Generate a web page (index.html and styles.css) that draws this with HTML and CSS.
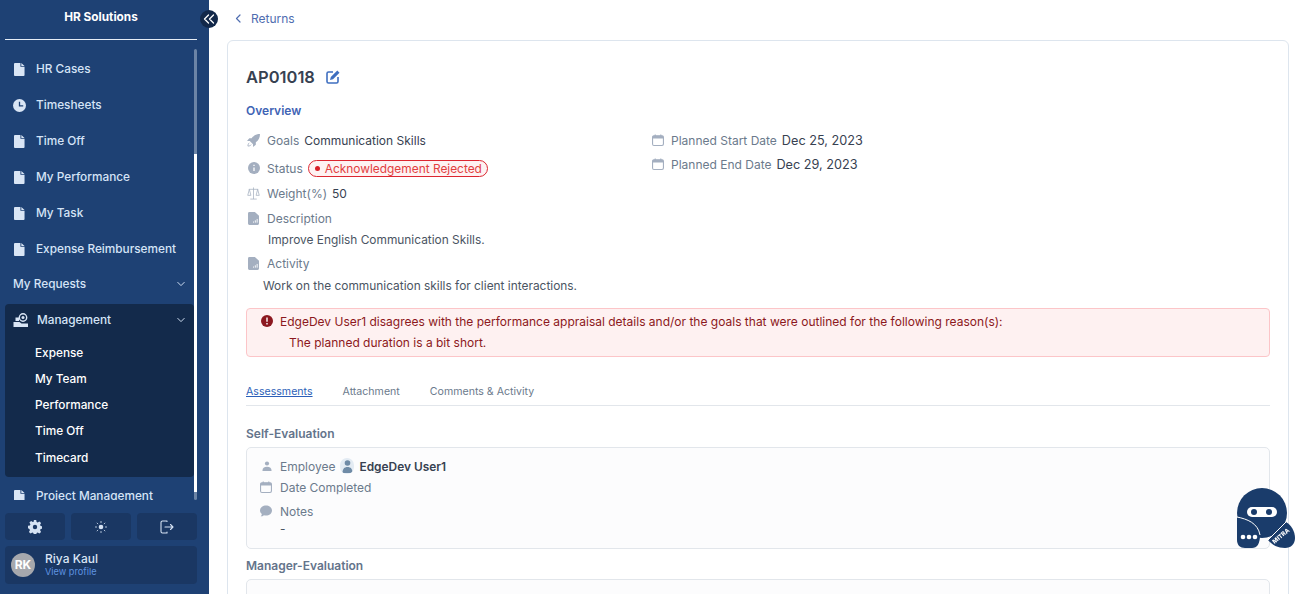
FILE: index.html
```html
<!DOCTYPE html>
<html lang="en">
  <head>
    <meta charset="UTF-8" />
    <meta name="viewport" content="width=device-width, initial-scale=1.0" />
    <title>HR Solutions</title>
    <link rel="stylesheet" href="styles.css">
  </head>

  <body>
    <svg class="sprite" width="0" height="0">
      <symbol id="i-file" viewBox="0 0 12 14"><path d="M1 0h6v4h4.500v9a1 1 0 0 1-1 1H1a1 1 0 0 1-1-1V1a1 1 0 0 1 1-1zM8 0l3.500 3.200H8z" fill="currentColor"/></symbol>
      <symbol id="i-doc" viewBox="0 0 12 14"><path d="M1.500 0H7.500l4.500 4v8.500A1.500 1.500 0 0 1 10.500 14h-9A1.500 1.500 0 0 1 0 12.500v-11A1.500 1.500 0 0 1 1.500 0z" fill="currentColor"/><path d="M6 11.500v-1.200M8 11.500V9M10 11.500V7.500" stroke="#fff" stroke-width="1"/></symbol>
      <symbol id="i-cal" viewBox="0 0 13 13"><rect x="0.600" y="2" width="11.800" height="10.400" rx="1.500" fill="none" stroke="currentColor" stroke-width="1.200"/><path d="M0.600 3.500a1.500 1.500 0 0 1 1.500-1.500h8.800a1.500 1.500 0 0 1 1.500 1.500V5H0.600z" fill="currentColor"/><path d="M3.500 0.500v2M9.500 0.500v2" stroke="currentColor" stroke-width="1.200"/></symbol>
      <symbol id="i-chev" viewBox="0 0 10 6"><path d="M1 1l4 4 4-4" fill="none" stroke="currentColor" stroke-width="1.200" stroke-linecap="round" stroke-linejoin="round"/></symbol>
    </svg>

    <aside class="sidebar">
      <div class="brand">HR Solutions</div>
      <button class="collapse-btn">
        <svg width="12" height="10" viewBox="0 0 12 10"><path d="M5.500 1L1.500 5l4 4M10.500 1l-4 4 4 4" fill="none" stroke="#fff" stroke-width="1.300" stroke-linecap="round" stroke-linejoin="round"/></svg>
      </button>

      <div class="nav-wrap">
        <nav class="nav">
          <a class="nav-item"><svg class="nav-icon"><use href="#i-file"/></svg>HR Cases</a>
          <a class="nav-item">
            <svg class="nav-icon clock" viewBox="0 0 14 14"><circle cx="7" cy="7" r="7" fill="currentColor"/><path d="M7 3V7.500H11" fill="none" stroke="#1e4174" stroke-width="1.400"/></svg>
            Timesheets
          </a>
          <a class="nav-item"><svg class="nav-icon"><use href="#i-file"/></svg>Time Off</a>
          <a class="nav-item"><svg class="nav-icon"><use href="#i-file"/></svg>My Performance</a>
          <a class="nav-item"><svg class="nav-icon"><use href="#i-file"/></svg>My Task</a>
          <a class="nav-item"><svg class="nav-icon"><use href="#i-file"/></svg>Expense Reimbursement</a>
          <a class="nav-group">My Requests<svg class="chev"><use href="#i-chev"/></svg></a>
          <div class="nav-open">
            <a class="nav-group open-head">
              <svg class="mgmt-icon" viewBox="0 0 16 14"><circle cx="10" cy="4.500" r="3.700" fill="none" stroke="currentColor" stroke-width="1.400"/><circle cx="10" cy="4.500" r="1.500" fill="currentColor"/><path d="M0.500 9h6l2 1.500h6.500V14H0.500z" fill="currentColor"/><path d="M2.500 4.500h3.500v3.500H2.500z" fill="currentColor"/></svg>
              Management<svg class="chev"><use href="#i-chev"/></svg>
            </a>
            <a class="sub-item">Expense</a>
            <a class="sub-item">My Team</a>
            <a class="sub-item">Performance</a>
            <a class="sub-item">Time Off</a>
            <a class="sub-item last">Timecard</a>
          </div>
          <a class="nav-item"><svg class="nav-icon"><use href="#i-file"/></svg>Project Management</a>
        </nav>
        <div class="rail"><div class="thumb"></div></div>
      </div>

      <div class="side-tools">
        <button class="tool">
          <svg width="14" height="14" viewBox="0 0 14 14"><path d="M5.800 0h2.400l.4 1.900 1.100.5 1.700-1 1.700 1.700-1 1.700.5 1.100 1.900.4v2.400l-1.900.4-.5 1.100 1 1.700-1.700 1.700-1.700-1-1.100.5-.4 1.900H5.800l-.4-1.900-1.100-.5-1.700 1-1.700-1.700 1-1.700-.5-1.100L0 8.200V5.800l1.900-.4.500-1.100-1-1.700 1.700-1.700 1.700 1 1.100-.5z" fill="#d5e2f3"/><circle cx="7" cy="7" r="2.200" fill="#1a3763"/></svg>
        </button>
        <button class="tool">
          <svg width="12" height="12" viewBox="0 0 12 12"><circle cx="6" cy="6" r="2.300" fill="#d5e2f3"/><path d="M6 0v2M6 10v2M0 6h2M10 6h2M1.800 1.800l1.300 1.300M8.900 8.900l1.300 1.300M1.800 10.200l1.300-1.300M8.900 3.100l1.300-1.300" stroke="#d5e2f3" stroke-width="0.800"/></svg>
        </button>
        <button class="tool">
          <svg width="14" height="14" viewBox="0 0 14 14"><path d="M7 1.500V1H2.500A1.500 1.500 0 0 0 1 2.500v9A1.500 1.500 0 0 0 2.500 13H7v-1M5 7h8M10.500 4.500L13 7l-2.500 2.500" fill="none" stroke="#d5e2f3" stroke-width="1.100" stroke-linecap="round" stroke-linejoin="round"/></svg>
        </button>
      </div>
      <div class="profile">
        <div class="avatar">RK</div>
        <div>
          <div class="profile-name">Riya Kaul</div>
          <a class="profile-link">View profile</a>
        </div>
      </div>
    </aside>

    <main class="content">
      <a class="back">
        <svg width="6" height="9" viewBox="0 0 6 9"><path d="M5 1L1.500 4.500 5 8" fill="none" stroke="currentColor" stroke-width="1.200" stroke-linecap="round" stroke-linejoin="round"/></svg>
        Returns
      </a>

      <section class="card">
        <h1 class="title">
          AP01018
          <svg width="14" height="14" viewBox="0 0 14 14"><path d="M7 2H2.500A1.500 1.500 0 0 0 1 3.500v8A1.500 1.500 0 0 0 2.500 13h8a1.500 1.500 0 0 0 1.500-1.500V7" fill="none" stroke="#3f6fc0" stroke-width="1.600"/><path d="M11.300 0.500l2.200 2.200L7 9.200l-3 .8.800-3z" fill="#3f6fc0"/></svg>
        </h1>
        <h2 class="overview">Overview</h2>

        <div class="details">
          <div class="col-left">
            <div class="row">
              <svg class="row-icon big" viewBox="0 0 14 14"><path d="M14 0c-4 0-7 1.500-9 4.500H2.500L0 7.500h3l3.500 3.500v3l3-2.500V9c3-2 4.500-5 4.500-9z" fill="#a4afc0"/><path d="M2.500 9.500C1.300 10.300 1 12 1 13c1 0 2.700-.3 3.500-1.500" fill="none" stroke="#a4afc0" stroke-width="1"/></svg>
              <span class="label">Goals</span><span class="value">Communication Skills</span>
            </div>
            <div class="row row-status">
              <svg class="row-icon" viewBox="0 0 12 12"><circle cx="6" cy="6" r="6" fill="#a4afc0"/><path d="M6 5.500v3.500M6 2.800v1.300" stroke="#fff" stroke-width="1.300"/></svg>
              <span class="label">Status</span>
              <span class="badge"><i class="badge-dot"></i>Acknowledgement Rejected</span>
            </div>
            <div class="row row-weight">
              <svg class="row-icon big" viewBox="0 0 14 14"><path d="M7 0.500V13M3.500 13h7M2 2.500h10M2.500 2.500L.8 9h3.400zM11.500 2.500L9.800 9h3.400z" fill="none" stroke="#a4afc0" stroke-width="0.800"/></svg>
              <span class="label">Weight(%)</span><span class="value">50</span>
            </div>
            <div class="row row-desc">
              <svg class="row-icon doc-icon"><use href="#i-doc"/></svg>
              <span class="label">Description</span>
            </div>
            <p class="text text-desc">Improve English Communication Skills.</p>
            <div class="row row-activity">
              <svg class="row-icon doc-icon"><use href="#i-doc"/></svg>
              <span class="label">Activity</span>
            </div>
            <p class="text text-activity">Work on the communication skills for client interactions.</p>
          </div>

          <div class="col-right">
            <div class="row">
              <svg class="row-icon cal-icon"><use href="#i-cal"/></svg>
              <span class="label">Planned Start Date</span><span class="value plain">Dec 25, 2023</span>
            </div>
            <div class="row">
              <svg class="row-icon cal-icon"><use href="#i-cal"/></svg>
              <span class="label">Planned End Date</span><span class="value plain">Dec 29, 2023</span>
            </div>
          </div>
        </div>

        <div class="alert">
          <div class="alert-head">
            <svg width="12" height="12" viewBox="0 0 12 12"><circle cx="6" cy="6" r="6" fill="#8c1820"/><path d="M6 2.500v4.200M6 8v1.500" stroke="#fff" stroke-width="1.400"/></svg>
            EdgeDev User1 disagrees with the performance appraisal details and/or the goals that were outlined for the following reason(s):
          </div>
          <p class="alert-reason">The planned duration is a bit short.</p>
        </div>

        <div class="tabs">
          <a class="tab active">Assessments</a>
          <a class="tab">Attachment</a>
          <a class="tab">Comments &amp; Activity</a>
        </div>

        <h3 class="eval-title first">Self-Evaluation</h3>
        <div class="eval-box">
          <div class="row">
            <svg class="row-icon person-icon" viewBox="0 0 12 12"><circle cx="6" cy="3" r="2.500" fill="#a4afc0"/><path d="M0.500 12c0-3.500 2-5 5.500-5s5.500 1.500 5.500 5z" fill="#a4afc0"/></svg>
            <span class="label">Employee</span>
            <span class="mini-avatar">
              <svg width="13" height="15" viewBox="0 0 13 15"><circle cx="6.500" cy="5" r="2.800" fill="#6f8ba6"/><path d="M1.500 15c0-4 1.800-6 5-6s5 2 5 6z" fill="#6f8ba6"/></svg>
            </span>
            <span class="value strong">EdgeDev User1</span>
          </div>
          <div class="row eval-date">
            <svg class="row-icon cal-icon"><use href="#i-cal"/></svg>
            <span class="label">Date Completed</span>
          </div>
          <div class="row eval-notes">
            <svg class="row-icon notes-icon" viewBox="0 0 13 12"><path d="M6.500 0C10 0 13 2.300 13 5.500S10 11 6.500 11c-.8 0-1.500-.1-2.200-.3C3.300 11.500 2 12 .8 12c.7-.8 1.100-1.700 1.200-2.700C.8 8.300 0 7 0 5.500 0 2.300 3 0 6.500 0z" fill="#a4afc0"/></svg>
            <span class="label">Notes</span>
          </div>
          <p class="text eval-dash">-</p>
        </div>

        <h3 class="eval-title">Manager-Evaluation</h3>
        <div class="eval-box"></div>
      </section>
    </main>

    <div class="bot">
      <svg width="60" height="62" viewBox="0 0 60 62">
        <circle cx="26" cy="25" r="25" fill="#1a3c6b"/>
        <path d="M1 29c10 2 21 6 23 18 0 9-3 13-8 13H9c-5 0-8-3-8-8z" fill="#1a3c6b"/>
        <path d="M1 29c10 2 21 6 23 18" fill="none" stroke="#fff" stroke-width="1"/>
        <path d="M32 52l18-18c5 3 9 9 9 16 0 6-4 10-10 10-7 0-13-3-17-8z" fill="#1a3c6b"/>
        <path d="M32 52l18-18" fill="none" stroke="#fff" stroke-width="1"/>
        <rect x="11" y="19" width="30" height="10" rx="5" fill="#fff"/>
        <circle cx="18" cy="24" r="3" fill="#1a3c6b"/>
        <circle cx="33" cy="24" r="3" fill="#1a3c6b"/>
        <circle cx="7" cy="49" r="2.300" fill="#fff"/><circle cx="13" cy="49" r="2.300" fill="#fff"/><circle cx="19" cy="49" r="2.300" fill="#fff"/>
        <text x="45" y="50" text-anchor="middle" transform="rotate(-40 45 48)" class="bot-text">MITRA</text>
      </svg>
    </div>
  </body>
</html>
```

FILE: styles.css
```css
* {
  box-sizing: border-box;
}

html,
body {
  height: 594px;
  overflow: hidden;
}

body {
  margin: 0;
  display: flex;
  font-family: Inter, "Liberation Sans", sans-serif;
  font-size: 12px;
  background: #fff;
  color: #374151;
}

.sprite {
  position: absolute;
}

/* sidebar */
.sidebar {
  position: relative;
  width: 209px;
  height: 594px;
  flex-shrink: 0;
  background: #1e4174;
  display: flex;
  flex-direction: column;
  padding: 0 12px 0 5px;
}

.brand {
  height: 40px;
  padding-bottom: 6px;
  border-bottom: 1px solid #e6edf6;
  color: #fff;
  font-size: 11.800px;
  font-weight: 700;
  line-height: 34px;
  text-align: center;
}

.collapse-btn {
  position: absolute;
  top: 10px;
  left: 200px;
  width: 18px;
  height: 18px;
  padding: 0;
  border: none;
  border-radius: 50%;
  background: #12284a;
  display: flex;
  align-items: center;
  justify-content: center;
}

.nav-wrap {
  height: 451px;
  margin-top: 9px;
  display: flex;
  overflow: hidden;
}

.nav {
  width: 189px;
  flex-shrink: 0;
  overflow: hidden;
  padding-top: 2px;
}

.nav-item,
.nav-group {
  height: 36px;
  display: flex;
  align-items: center;
  color: #d5e4f7;
  font-size: 11.800px;
  font-weight: 500;
}

.nav-item {
  padding-left: 9px;
}

.nav-icon {
  width: 11px;
  height: 13px;
  margin-right: 11px;
  color: #d9e5f5;
  flex-shrink: 0;
}

.nav-icon.clock {
  width: 13px;
  height: 13px;
  margin-left: -1px;
  margin-right: 10px;
}

.nav-group {
  height: 34px;
  padding: 0 9px 0 8px;
  justify-content: space-between;
}

.chev {
  width: 8px;
  height: 6px;
  color: #d5e4f7;
}

.nav-open {
  background: #132a4b;
  border-radius: 4px;
  height: 173px;
  margin-top: 3px;
  margin-bottom: 1px;
}

.open-head {
  height: 32px;
  margin-bottom: 4px;
  justify-content: flex-start;
}

.open-head .chev {
  margin-left: auto;
}

.mgmt-icon {
  width: 16px;
  height: 14px;
  margin-right: 8px;
  color: #d9e5f5;
}

.sub-item {
  display: block;
  height: 26px;
  padding-left: 30px;
  color: #fff;
  font-size: 11.800px;
  font-weight: 500;
  line-height: 26px;
}

.sub-item.last {
  height: 27px;
  line-height: 28px;
}

.rail {
  width: 3px;
  height: 451px;
  background: #6c84a6;
  border-radius: 2px;
  flex-shrink: 0;
}

.thumb {
  width: 3px;
  height: 338px;
  margin-top: 105px;
  background: #fff;
}

.side-tools {
  margin-top: 13px;
  display: flex;
  gap: 6px;
}

.tool {
  width: 60px;
  height: 27px;
  padding: 0;
  border: none;
  border-radius: 4px;
  background: #1a3763;
  display: flex;
  align-items: center;
  justify-content: center;
}

.profile {
  height: 38px;
  margin-top: 6px;
  padding-left: 6px;
  border-radius: 4px;
  background: #1a3763;
  display: flex;
  align-items: center;
  gap: 10px;
}

.avatar {
  width: 24px;
  height: 24px;
  border-radius: 50%;
  background: #a6a8ad;
  color: #fff;
  font-size: 12px;
  font-weight: 700;
  line-height: 24px;
  text-align: center;
}

.profile-name {
  color: #d9e5f5;
  font-size: 12px;
  font-weight: 500;
  line-height: 14px;
}

.profile-link {
  display: block;
  color: #5f93e0;
  font-size: 9.200px;
  line-height: 12px;
}

/* main */
.content {
  flex: 1;
  min-width: 0;
  padding: 0 13px 0 18px;
}

.back {
  height: 40px;
  padding: 0 0 3px 8px;
  display: flex;
  align-items: center;
  gap: 10px;
  color: #4f6db0;
  font-size: 12px;
}

.card {
  height: 600px;
  padding: 0 18px;
  border: 1px solid #dde5ee;
  border-radius: 6px;
}

.title {
  margin: 25px 0 0;
  height: 22px;
  display: flex;
  align-items: center;
  gap: 11px;
  color: #374151;
  font-size: 16.500px;
  font-weight: 600;
  line-height: 22px;
}

.overview {
  margin: 15px 0 0;
  color: #3f64b5;
  font-size: 12px;
  font-weight: 600;
  line-height: 16px;
}

.details {
  display: flex;
  margin-top: 12px;
}

.col-left {
  width: 405px;
}

.row {
  display: flex;
  align-items: center;
  height: 18px;
}

.row-icon {
  width: 12px;
  height: 12px;
  margin: 0 7px 0 2px;
  flex-shrink: 0;
}

.row-icon.big {
  width: 13px;
  height: 13px;
  margin: 0 7px 0 1px;
}

.doc-icon {
  color: #a4afc0;
  width: 11px;
  height: 13px;
  margin-right: 8px;
}

.cal-icon {
  color: #a4afc0;
  margin: 0 7px 0 1px;
}

.label {
  color: #6b7a8c;
}

.value {
  margin-left: 5px;
  color: #374151;
  font-size: 12px;
}

.value.plain {
  font-size: 12.700px;
}

.value.strong {
  font-size: 11.900px;
  font-weight: 600;
}

.row-status {
  margin-top: 10px;
}

.badge {
  margin-left: 5px;
  height: 17px;
  padding: 0 5px 0 6px;
  display: flex;
  align-items: center;
  gap: 5px;
  border: 1px solid #dc2630;
  border-radius: 9px;
  background: #fef2f2;
  color: #e2403f;
  font-size: 11.900px;
}

.badge-dot {
  width: 5px;
  height: 5px;
  border-radius: 50%;
  background: #d81e28;
}

.row-weight,
.row-desc {
  margin-top: 7px;
}

.row-activity {
  margin-top: 5px;
}

.text {
  margin: 0;
  color: #4b5563;
  font-size: 11.900px;
  line-height: 18px;
}

.text-desc {
  margin-top: 4px;
  padding-left: 22px;
}

.text-activity {
  margin-top: 5px;
  padding-left: 17px;
}

.col-right .row + .row {
  margin-top: 6px;
}

.alert {
  height: 49px;
  margin-top: 13px;
  padding: 3px 14px 0;
  border: 1px solid #fcc5c8;
  border-radius: 4px;
  background: #fef1f1;
  color: #8c1820;
}

.alert-head {
  height: 18px;
  display: flex;
  align-items: center;
  gap: 7px;
}

.alert-reason {
  margin: 4px 0 0 28px;
  line-height: 18px;
}

.tabs {
  height: 24px;
  margin-top: 25px;
  display: flex;
  gap: 30px;
  border-bottom: 1px solid #e2e6eb;
}

.tab {
  color: #6b7a8c;
  font-size: 10.600px;
  line-height: 20px;
}

.tab.active {
  color: #2c5fb8;
  text-decoration: underline;
}

.eval-title {
  margin: 9px 0 0;
  color: #64748b;
  font-size: 12px;
  font-weight: 600;
  line-height: 16px;
}

.eval-title.first {
  margin-top: 20px;
}

.eval-box {
  height: 102px;
  margin-top: 5px;
  padding: 9px 13px 0;
  border: 1px solid #e2e6eb;
  border-radius: 5px;
  background: #fcfcfd;
}

.eval-box .row-icon {
  margin: 0 8px 0 0;
}

.eval-box .person-icon {
  width: 10px;
  margin-left: 2px;
}

.mini-avatar {
  width: 14px;
  height: 16px;
  margin-left: 5px;
  border-radius: 7px;
  background: #e3ebf3;
  display: flex;
  justify-content: center;
  overflow: hidden;
}

.eval-date {
  margin-top: 3px;
}

.eval-notes {
  margin-top: 6px;
}

.eval-dash {
  margin-top: 1px;
  padding-left: 20px;
  line-height: 16px;
}

/* floating assistant */
.bot {
  position: fixed;
  left: 1236px;
  top: 488px;
  width: 60px;
  height: 62px;
}

.bot-text {
  fill: #fff;
  font-size: 6px;
  font-weight: 800;
}
```
